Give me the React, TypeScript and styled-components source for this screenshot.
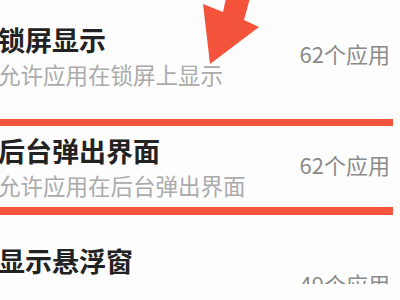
import styled, { createGlobalStyle } from 'styled-components';

const GlobalStyle = createGlobalStyle`
  html, body {
    margin: 0;
    padding: 0;
    background: #fdfdfd;
    overflow: hidden;
  }
  body {
    font-family: "Noto Sans CJK SC", "Noto Sans", sans-serif;
  }
`;

const Page = styled.div`
  position: relative;
  width: 400px;
  height: 300px;
  overflow: hidden;
  background: #fdfdfd;
`;

const Screen = styled.div`
  height: 284px;
  overflow: hidden;
`;

const List = styled.div`
  display: flex;
  flex-direction: column;
  margin-left: -2px;
  width: 395px;
`;

const Row = styled.div<{ $top: number; $bottom: number }>`
  display: flex;
  align-items: center;
  justify-content: space-between;
  padding: ${(p) => p.$top}px 3px ${(p) => p.$bottom}px 0;
`;

const Highlight = styled.div`
  border-top: 7px solid #f2543c;
  border-bottom: 8px solid #f2543c;
`;

const Texts = styled.div`
  display: flex;
  flex-direction: column;
  gap: 3px;
  max-width: 270px;
`;

const Title = styled.div`
  font-size: 27px;
  line-height: 32px;
  font-weight: 600;
  color: #222;
  white-space: nowrap;
`;

const Subtitle = styled.div`
  font-size: 22.5px;
  line-height: 30px;
  color: #ababab;
`;

const Value = styled.div<{ $lift: number }>`
  font-size: 22px;
  line-height: 30px;
  color: #8a8a8a;
  margin-bottom: ${(p) => p.$lift}px;
  white-space: nowrap;
`;

const Arrow = styled.svg`
  position: absolute;
  left: 0;
  top: 0;
  pointer-events: none;
`;

const rows = [
  { title: '锁屏显示', desc: '允许应用在锁屏上显示', count: '62个应用' },
  { title: '后台弹出界面', desc: '允许应用在后台弹出界面', count: '62个应用' },
  { title: '显示悬浮窗', desc: '允许应用在其他应用上层显示悬浮窗', count: '49个应用' },
];

function Item({
  item,
  top,
  bottom,
  lift = 8,
}: {
  item: (typeof rows)[number];
  top: number;
  bottom: number;
  lift?: number;
}) {
  return (
    <Row $top={top} $bottom={bottom}>
      <Texts>
        <Title>{item.title}</Title>
        <Subtitle>{item.desc}</Subtitle>
      </Texts>
      <Value $lift={lift}>{item.count}</Value>
    </Row>
  );
}

export default function App() {
  return (
    <Page>
      <GlobalStyle />
      <Screen>
        <List>
          <Item item={rows[0]} top={24} bottom={30} />
          <Highlight>
            <Item item={rows[1]} top={9} bottom={7} />
          </Highlight>
          <Item item={rows[2]} top={30} bottom={20} lift={20} />
        </List>
      </Screen>
      <Arrow width="400" height="300" viewBox="0 0 400 300">
        <polygon
          points="203,4 223,12 226,-2 250,-2 244,20 259,27 210,64"
          fill="#f4533b"
        />
      </Arrow>
    </Page>
  );
}
